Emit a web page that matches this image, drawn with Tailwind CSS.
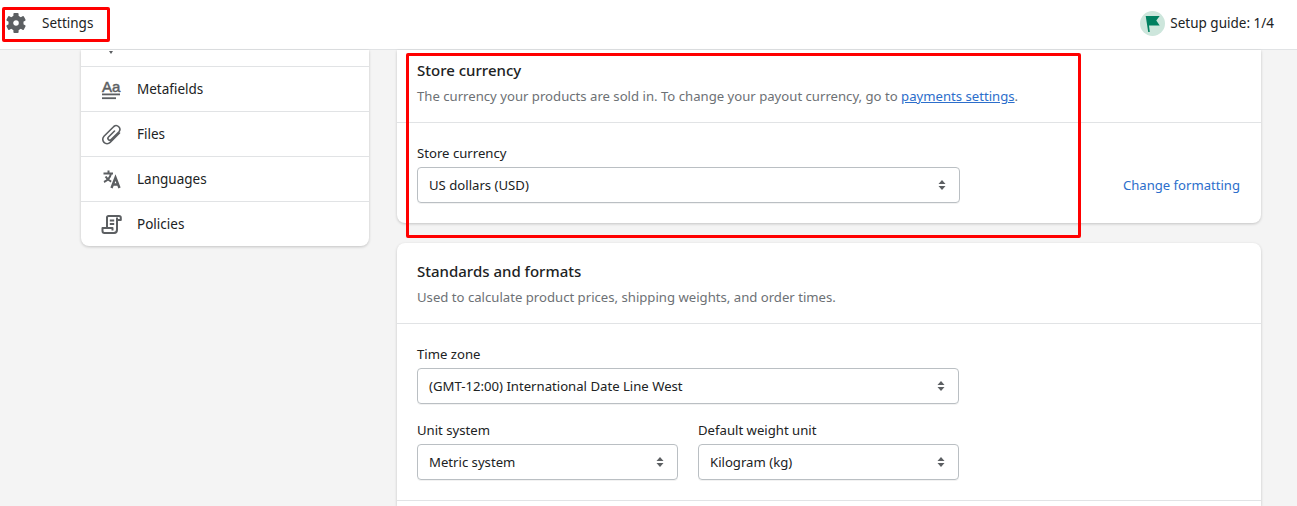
<!DOCTYPE html>
<html lang="en">
  <head>
    <meta charset="UTF-8" />
    <title>Settings</title>
    <script src="https://cdn.jsdelivr.net/npm/@tailwindcss/browser@4"></script>
  </head>
  <body class="relative h-[506px] overflow-hidden bg-[#f4f4f4] font-['Noto_Sans',sans-serif] text-[13.15px] leading-5 text-[#202223]">
    <!-- top bar -->
    <header class="flex h-[50px] items-center justify-between border-b border-[#e1e3e5] bg-white pb-[3px] pl-[6px] pr-[23px] text-[13.5px]">
      <div class="flex items-center gap-[16px]">
        <svg class="h-[20px] w-[20px]" viewBox="0 0 20 20" fill="#5c5f62">
          <circle cx="10" cy="10" r="5.2" fill="none" stroke="#5c5f62" stroke-width="4.8" />
          <rect x="7.4" y="0" width="5.2" height="4.5" rx="1" />
          <rect x="7.4" y="0" width="5.2" height="4.5" rx="1" transform="rotate(60 10 10)" />
          <rect x="7.4" y="0" width="5.2" height="4.5" rx="1" transform="rotate(120 10 10)" />
          <rect x="7.4" y="0" width="5.2" height="4.5" rx="1" transform="rotate(180 10 10)" />
          <rect x="7.4" y="0" width="5.2" height="4.5" rx="1" transform="rotate(240 10 10)" />
          <rect x="7.4" y="0" width="5.2" height="4.5" rx="1" transform="rotate(300 10 10)" />
        </svg>
        <span>Settings</span>
      </div>
      <div class="flex items-center gap-[5px]">
        <span class="flex h-[25px] w-[25px] items-center justify-center rounded-full bg-[#cde6dc]">
          <svg class="h-[17px] w-[17px]" viewBox="0 0 17 17" fill="#008060">
            <path d="M1.700 1h14l-3.400 4.500 3.400 5H5l.8 6.500H4.200z" />
          </svg>
        </span>
        <span>Setup guide: 1/4</span>
      </div>
    </header>

    <main class="flex items-start gap-[28px] pl-[81px]">
      <!-- settings nav -->
      <nav class="w-[288px] overflow-hidden rounded-b-lg bg-white text-[13.5px] shadow-[0_1px_3px_rgba(0,0,0,0.2)]">
        <div class="flex h-[17px] overflow-hidden border-b border-[#e1e3e5] pl-[28px] pt-px">
          <span class="h-0 w-0 border-x-[2px] border-t-[3px] border-x-transparent border-t-[#5c5f62]"></span>
        </div>
        <a class="flex h-[45px] items-center gap-[15px] border-b border-[#e1e3e5] pl-[20px]">
          <svg class="h-[21px] w-[21px]" viewBox="0 0 21 21" fill="#5c5f62" stroke="none">
            <text x="1" y="12.500" font-family="Liberation Sans, sans-serif" font-size="15" stroke="#5c5f62" stroke-width=".5">Aa</text>
            <rect x="1" y="14.500" width="18" height="1.800" />
            <rect x="1" y="18.300" width="14" height="1.800" />
          </svg>
          <span>Metafields</span>
        </a>
        <a class="flex h-[45px] items-center gap-[15px] border-b border-[#e1e3e5] pl-[20px]">
          <svg class="h-[21px] w-[21px]" viewBox="0 0 21 21" fill="none" stroke="#5c5f62" stroke-width="1.600" stroke-linecap="round">
            <path d="M13.500 7 7.500 13a1.800 1.800 0 0 0 2.600 2.600L18 7.700a3.700 3.700 0 0 0-5.200-5.200L3 12.300a4.300 4.300 0 0 0 6.100 6.100L18.500 9" />
          </svg>
          <span>Files</span>
        </a>
        <a class="flex h-[45px] items-center gap-[15px] border-b border-[#e1e3e5] pl-[20px]">
          <svg class="h-[21px] w-[21px]" viewBox="0 0 21 21" fill="none" stroke="#5c5f62" stroke-width="2">
            <path d="M2.500 4.500h9.500M7.500 1.500v3M10 4.700c-1 4-3.500 6.800-7 8.300M4.600 7.600c1.300 2.400 3.300 4 5.600 5" />
            <path d="M10.500 19 14.500 8.500l4 10.500M12 15.500h5" stroke-width="2.400" />
          </svg>
          <span>Languages</span>
        </a>
        <a class="flex h-[44px] items-center gap-[15px] pl-[20px]">
          <svg class="h-[21px] w-[21px]" viewBox="0 0 21 21" fill="none" stroke="#5c5f62" stroke-width="2" stroke-linejoin="round">
            <path d="M6 14V3.500A1.500 1.500 0 0 1 7.500 2H18a1.800 1.800 0 0 1 1.800 1.800V6H16M16 3.500V15.500a3.300 3.300 0 0 1-3 3.500H3.500A2 2 0 0 1 1.500 17v-3h10v2.500" />
            <path d="M8.800 6.500h4.400M8.800 10h4.400" />
          </svg>
          <span>Policies</span>
        </a>
      </nav>

      <!-- content cards -->
      <div class="flex w-[864px] flex-col gap-[20px]">
        <section class="rounded-b-lg bg-white shadow-[0_1px_3px_rgba(0,0,0,0.2)]">
          <div class="border-b border-[#e1e3e5] px-5 pb-4 pt-2">
            <h2 class="text-[15px] leading-6 font-medium">Store currency</h2>
            <p class="mt-1 text-[#6d7175]">The currency your products are sold in. To change your payout currency, go to <a class="text-[#2c6ecb] underline">payments settings</a>.</p>
          </div>
          <div class="flex items-end justify-between pb-5 pl-5 pr-[21px] pt-5">
            <div class="w-[543px]">
              <label class="mb-1 block">Store currency</label>
              <div class="flex h-9 items-center justify-between rounded border border-[#babfc3] pl-[11px] pr-[13px] shadow-[0_1px_0_rgba(0,0,0,0.05)]">
                <span>US dollars (USD)</span>
                <svg class="h-3 w-2" viewBox="0 0 8 12" fill="#5c5f62"><path d="M4 1 7.500 5H.5zM4 11 .5 7h7z" /></svg>
              </div>
            </div>
            <a class="flex h-9 items-center text-[13.1px] text-[#2c6ecb]">Change formatting</a>
          </div>
        </section>

        <section class="rounded-t-lg bg-white shadow-[0_1px_3px_rgba(0,0,0,0.2)]">
          <div class="border-b border-[#e1e3e5] px-5 pb-4 pt-4">
            <h2 class="text-[15px] leading-6 font-medium">Standards and formats</h2>
            <p class="mt-1 text-[#6d7175]">Used to calculate product prices, shipping weights, and order times.</p>
          </div>
          <div class="flex w-[562px] flex-col gap-4 pb-5 pl-5 pt-5">
            <div>
              <label class="mb-1 block">Time zone</label>
              <div class="flex h-9 items-center justify-between rounded border border-[#babfc3] pl-[11px] pr-[13px] shadow-[0_1px_0_rgba(0,0,0,0.05)]">
                <span>(GMT-12:00) International Date Line West</span>
                <svg class="h-3 w-2" viewBox="0 0 8 12" fill="#5c5f62"><path d="M4 1 7.500 5H.5zM4 11 .5 7h7z" /></svg>
              </div>
            </div>
            <div class="grid grid-cols-2 gap-5">
              <div>
                <label class="mb-1 block">Unit system</label>
                <div class="flex h-9 items-center justify-between rounded border border-[#babfc3] pl-[11px] pr-[13px] shadow-[0_1px_0_rgba(0,0,0,0.05)]">
                  <span>Metric system</span>
                  <svg class="h-3 w-2" viewBox="0 0 8 12" fill="#5c5f62"><path d="M4 1 7.500 5H.5zM4 11 .5 7h7z" /></svg>
                </div>
              </div>
              <div>
                <label class="mb-1 block">Default weight unit</label>
                <div class="flex h-9 items-center justify-between rounded border border-[#babfc3] pl-[11px] pr-[13px] shadow-[0_1px_0_rgba(0,0,0,0.05)]">
                  <span>Kilogram (kg)</span>
                  <svg class="h-3 w-2" viewBox="0 0 8 12" fill="#5c5f62"><path d="M4 1 7.500 5H.5zM4 11 .5 7h7z" /></svg>
                </div>
              </div>
            </div>
          </div>
          <div class="h-[6px] border-t border-[#e1e3e5]"></div>
        </section>
      </div>
    </main>

    <!-- red annotation boxes drawn over the screenshot -->
    <div class="absolute left-[2px] top-[7px] h-[35px] w-[108px] rounded-[2px] border-[3px] border-[#ff0000]"></div>
    <div class="absolute left-[406px] top-[53px] h-[185px] w-[675px] rounded-[2px] border-[3px] border-[#ff0000]"></div>
  </body>
</html>
